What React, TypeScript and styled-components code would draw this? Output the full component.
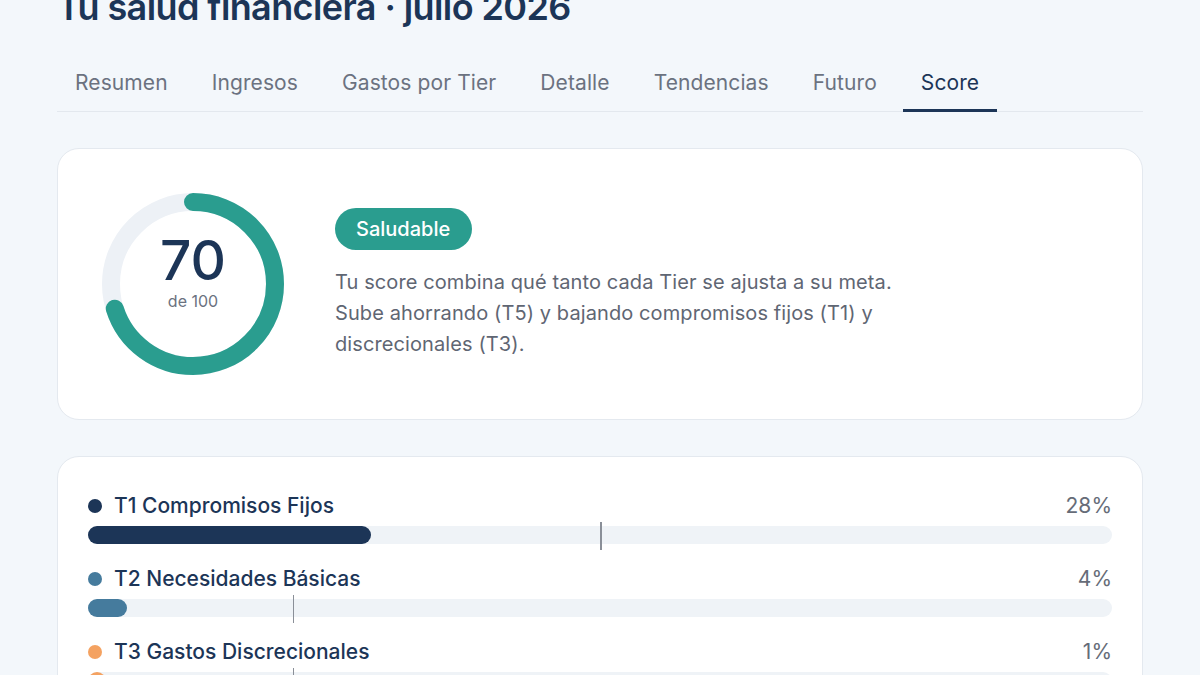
import React from 'react';
import styled, { createGlobalStyle } from 'styled-components';

const GlobalStyle = createGlobalStyle`
  html, body {
    margin: 0;
    padding: 0;
    background: #f3f7fb;
    font-family: Inter, "Noto Sans", sans-serif;
    overflow: hidden;
  }
`;

const NAVY = '#1c3557';
const TEAL = '#2a9d8f';

const tabs = ['Resumen', 'Ingresos', 'Gastos por Tier', 'Detalle', 'Tendencias', 'Futuro', 'Score'];

const tiers = [
  { name: 'T1 Compromisos Fijos', color: NAVY, value: 27.6, target: 50 },
  { name: 'T2 Necesidades Básicas', color: '#457b9d', value: 3.8, target: 20 },
  { name: 'T3 Gastos Discrecionales', color: '#f4a261', value: 1.2, target: 20 },
];

const Page = styled.main`
  padding: 0 57px;
  margin-top: -15px;
`;

const Title = styled.h1`
  margin: 0;
  font-size: 36px;
  line-height: 44px;
  font-weight: 600;
  color: ${NAVY};
  letter-spacing: -0.6px;
`;

const TabBar = styled.nav`
  display: flex;
  gap: 8px;
  margin-top: 27px;
  border-bottom: 1px solid #e3e8ee;
`;

const Tab = styled.button<{ $active?: boolean }>`
  border: 0;
  background: none;
  padding: 14px 18px 13px;
  margin-bottom: -1px;
  font-family: inherit;
  font-size: 21px;
  line-height: 26px;
  letter-spacing: 0.1px;
  color: ${(p) => (p.$active ? NAVY : '#6b7280')};
  border-bottom: 3px solid ${(p) => (p.$active ? NAVY : 'transparent')};
  cursor: pointer;
`;

const Card = styled.section`
  background: #fff;
  border: 1px solid #e4e9ef;
  border-radius: 22px;
  margin-top: 36px;
`;

const ScoreCard = styled(Card)`
  display: flex;
  align-items: center;
  gap: 51px;
  padding: 44px 44px;
`;

const Donut = styled.div`
  position: relative;
  width: 182px;
  height: 182px;
  flex-shrink: 0;
`;

const DonutCenter = styled.div`
  position: absolute;
  inset: 0;
  display: flex;
  flex-direction: column;
  align-items: center;
  justify-content: center;
  gap: 4px;
  padding-bottom: 26px;
`;

const ScoreNum = styled.div`
  font-size: 55px;
  line-height: 56px;
  font-weight: 500;
  color: ${NAVY};
`;

const ScoreOf = styled.div`
  font-size: 16px;
  line-height: 18px;
  color: #6b7280;
`;

const Info = styled.div`
  display: flex;
  flex-direction: column;
  align-items: flex-start;
  gap: 17px;
`;

const Badge = styled.span`
  background: ${TEAL};
  color: #fff;
  font-size: 20px;
  font-weight: 500;
  line-height: 42px;
  padding: 0 22px 0 21px;
  border-radius: 21px;
`;

const Desc = styled.p`
  margin: 0;
  max-width: 580px;
  font-size: 20px;
  line-height: 31px;
  letter-spacing: 0.1px;
  color: #5f6673;
`;

const TierCard = styled(Card)`
  padding: 37px 30px;
  display: flex;
  flex-direction: column;
  gap: 23px;
`;

const TierRow = styled.div`
  display: flex;
  flex-direction: column;
  gap: 8px;
`;

const TierHead = styled.div`
  display: flex;
  align-items: center;
  justify-content: space-between;
  font-size: 21px;
  line-height: 24px;
`;

const TierName = styled.span`
  display: flex;
  align-items: center;
  gap: 12px;
  color: ${NAVY};
  font-weight: 500;
`;

const Dot = styled.span<{ $color: string }>`
  width: 14px;
  height: 14px;
  border-radius: 50%;
  background: ${(p) => p.$color};
`;

const Pct = styled.span`
  color: #666c78;
`;

const Track = styled.div`
  position: relative;
  height: 18px;
  border-radius: 9px;
  background: #eff3f7;
`;

const Fill = styled.div<{ $color: string }>`
  height: 100%;
  min-width: 18px;
  border-radius: 9px;
  background: ${(p) => p.$color};
`;

const Marker = styled.div`
  position: absolute;
  top: -4px;
  width: 1.5px;
  height: 28px;
  background: #8a8f98;
`;

const R = 82;
const C = 2 * Math.PI * R;

export default function App() {
  const score = 70;
  return (
    <>
      <GlobalStyle />
      <Page>
        <Title>Tu salud financiera · julio 2026</Title>
        <TabBar>
          {tabs.map((t) => (
            <Tab key={t} $active={t === 'Score'}>
              {t}
            </Tab>
          ))}
        </TabBar>

        <ScoreCard>
          <Donut>
            <svg width="182" height="182" viewBox="0 0 182 182">
              <circle cx="91" cy="91" r={R} fill="none" stroke="#edf1f6" strokeWidth="18" />
              <circle
                cx="91"
                cy="91"
                r={R}
                fill="none"
                stroke={TEAL}
                strokeWidth="18"
                strokeLinecap="round"
                strokeDasharray={`${(C * score) / 100} ${C}`}
                transform="rotate(-90 91 91)"
              />
            </svg>
            <DonutCenter>
              <ScoreNum>{score}</ScoreNum>
              <ScoreOf>de 100</ScoreOf>
            </DonutCenter>
          </Donut>
          <Info>
            <Badge>Saludable</Badge>
            <Desc>
              Tu score combina qué tanto cada Tier se ajusta a su meta. Sube ahorrando (T5) y bajando
              compromisos fijos (T1) y discrecionales (T3).
            </Desc>
          </Info>
        </ScoreCard>

        <TierCard>
          {tiers.map((t) => (
            <TierRow key={t.name}>
              <TierHead>
                <TierName>
                  <Dot $color={t.color} />
                  {t.name}
                </TierName>
                <Pct>{Math.round(t.value)}%</Pct>
              </TierHead>
              <Track>
                <Fill $color={t.color} style={{ width: `${t.value}%` }} />
                <Marker style={{ left: `${t.target}%` }} />
              </Track>
            </TierRow>
          ))}
        </TierCard>
      </Page>
    </>
  );
}
